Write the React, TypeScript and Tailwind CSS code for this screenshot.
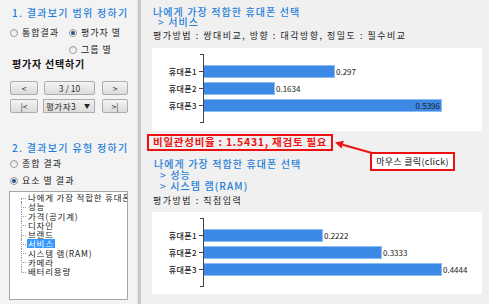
const font = "font-['Noto_Sans_CJK_KR','Noto_Sans',sans-serif]";

type Row = { label: string; value: number; text: string; inside?: boolean };

const serviceRows: Row[] = [
  { label: "휴대폰1", value: 0.297, text: "0.297" },
  { label: "휴대폰2", value: 0.1634, text: "0.1634" },
  { label: "휴대폰3", value: 0.5396, text: "0.5396", inside: true },
];

const ramRows: Row[] = [
  { label: "휴대폰1", value: 0.2222, text: "0.2222" },
  { label: "휴대폰2", value: 0.3333, text: "0.3333" },
  { label: "휴대폰3", value: 0.4444, text: "0.4444" },
];

const treeItems = [
  "나에게 가장 적합한 휴대폰 선택",
  "성능",
  "가격(공기계)",
  "디자인",
  "브랜드",
  "서비스",
  "시스템 램(RAM)",
  "카메라",
  "배터리용량",
];

function Radio({ label, checked }: { label: string; checked?: boolean }) {
  return (
    <div className="flex items-center gap-[4px] h-[12px]">
      <span className="w-[8px] h-[8px] rounded-full border border-[#9a9a9a] bg-gradient-to-b from-[#e6e6e6] to-[#fbfbfb] flex items-center justify-center">
        {checked && <span className="w-[4px] h-[4px] rounded-full bg-[#26518f]" />}
      </span>
      <span className="text-[9px] leading-[12px] text-[#222] tracking-[1px]">{label}</span>
    </div>
  );
}

function Btn({ w, children }: { w: string; children: React.ReactNode }) {
  return (
    <div
      className={`${w} h-[14px] rounded-[2px] border border-[#acacac] bg-gradient-to-b from-[#f4f4f4] to-[#dcdcdc] flex items-center justify-center text-[8.5px] leading-none text-[#333]`}
    >
      {children}
    </div>
  );
}

function BarChart({ rows, h }: { rows: Row[]; h: string }) {
  const max = Math.max(...rows.map((r) => r.value));
  return (
    <div className={`ml-[11px] w-[330px] ${h} bg-white relative pt-[17px]`}>
      <div className="absolute left-[48px] top-[6px] w-[4px] h-[69px] border-y border-r border-[#444]" />
      {rows.map((r) => (
        <div key={r.label} className="flex items-center h-[13px] mb-[4px]">
          <span className="w-[45px] text-right text-[8px] leading-none font-medium text-[#222] tracking-[0.4px]">
            {r.label}
          </span>
          <span className="ml-[2px] w-[4px] h-px bg-[#444]" />
          <div
            className="h-[13px] bg-[#3c89e6] border border-[#8dbdf3] flex items-center justify-end"
            style={{ width: Math.round((r.value / max) * 239) }}
          >
            {r.inside && <span className="text-[8px] leading-none text-[#222] pr-[1px]">{r.text}</span>}
          </div>
          {!r.inside && <span className="ml-[1px] text-[8px] leading-none text-[#222]">{r.text}</span>}
        </div>
      ))}
    </div>
  );
}

export default function App() {
  return (
    <div className={`w-[489px] h-[304px] flex overflow-hidden bg-[#f0f0f0] ${font}`}>
      {/* 왼쪽 설정 패널 */}
      <div className="w-[137px] shrink-0 bg-[#f3f3f3] pt-[7px] flex flex-col">
        <div className="ml-[12px] text-[10px] leading-[11px] font-medium text-[#1f7fd8] tracking-[1.3px] whitespace-nowrap">
          1. 결과보기 범위 정하기
        </div>
        <div className="ml-[10px] mt-[9px] flex">
          <div className="w-[59px]">
            <Radio label="통합결과" />
          </div>
          <Radio label="평가자 별" checked />
        </div>
        <div className="ml-[69px] mt-[5px]">
          <Radio label="그룹 별" />
        </div>
        <div className="ml-[12px] mt-[2px] text-[10px] leading-[11px] font-bold text-[#111] tracking-[0.8px]">
          평가자 선택하기
        </div>

        <div className="ml-[10px] mt-[12px] flex gap-[6px]">
          <Btn w="w-[28px]">&lt;</Btn>
          <Btn w="w-[51px]">3 / 10</Btn>
          <div className="ml-[1px]">
            <Btn w="w-[26px]">&gt;</Btn>
          </div>
        </div>
        <div className="ml-[10px] mt-[4px] flex gap-[5px]">
          <Btn w="w-[28px]">|&lt;</Btn>
          <div className="w-[52px] h-[14px] border border-[#acacac] bg-gradient-to-b from-[#f0f0f0] to-[#dddddd] flex items-center justify-between pl-[2px] pr-[4px] text-[8.5px] leading-none text-[#222]">
            <span className="tracking-[0.5px]">평가자3</span>
            <span className="text-[6px]">▼</span>
          </div>
          <div className="ml-[2px]">
            <Btn w="w-[26px]">&gt;|</Btn>
          </div>
        </div>

        <div className="ml-[12px] mt-[29px] text-[10px] leading-[11px] font-medium text-[#1f7fd8] tracking-[1.3px] whitespace-nowrap">
          2. 결과보기 유형 정하기
        </div>
        <div className="ml-[10px] mt-[5px]">
          <Radio label="종합 결과" />
        </div>
        <div className="ml-[10px] mt-[5px]">
          <Radio label="요소 별 결과" checked />
        </div>

        {/* 트리 */}
        <div className="ml-[9px] mt-[4px] w-[119px] h-[109px] bg-white border border-[#a5a5a5] overflow-hidden pt-[1px]">
          {treeItems.map((t, i) => (
            <div key={t} className="relative h-[9.25px] pl-[17px] flex items-center whitespace-nowrap">
              <span
                className={`absolute left-[11px] w-0 border-l border-dotted border-[#9a9a9a] ${
                  i === 0 ? "top-[4.5px] bottom-0" : i === treeItems.length - 1 ? "top-0 h-[4.5px]" : "top-0 bottom-0"
                }`}
              />
              <span className="absolute left-[11px] top-[4.5px] w-[5px] h-0 border-t border-dotted border-[#9a9a9a]" />
              <span
                className={`text-[8.5px] leading-[9px] px-[1px] tracking-[0.8px] ${
                  t === "서비스" ? "bg-[#3399ff] text-white" : "text-[#222]"
                }`}
              >
                {t}
              </span>
            </div>
          ))}
        </div>
      </div>

      {/* 구분선 */}
      <div className="w-[4px] shrink-0 bg-[#c8c8c8] border-l border-[#dedede]" />

      {/* 오른쪽 결과 패널 */}
      <div className="flex-1 relative pt-[7px] flex flex-col">
        <div className="ml-[12px] text-[10px] leading-[10px] font-medium text-[#1f7fd8] tracking-[1.1px]">
          나에게 가장 적합한 휴대폰 선택
        </div>
        <div className="ml-[17px] text-[10px] leading-[10px] font-medium text-[#1f7fd8] tracking-[1.1px]">&gt; 서비스</div>
        <div className="ml-[12px] mt-[4px] text-[9px] leading-[10px] text-[#222] tracking-[1.5px] whitespace-nowrap">
          평가방법 : 쌍대비교, 방향 : 대각방향, 정밀도 : 필수비교
        </div>
        <div className="mt-[7px]">
          <BarChart rows={serviceRows} h="h-[83px]" />
        </div>

        <div className="ml-[6px] mt-[3px] w-[186px] h-[17px] border-2 border-[#ee1111] flex items-center pl-[4px] text-[10.5px] leading-none font-bold text-[#ee1111] tracking-[0.75px] whitespace-nowrap">
          비일관성비율 : 1.5431, 재검토 필요
        </div>

        <div className="ml-[13px] mt-[7px] text-[10px] leading-[11px] font-medium text-[#1f7fd8] tracking-[1.1px]">
          나에게 가장 적합한 휴대폰 선택
        </div>
        <div className="ml-[19px] text-[10px] leading-[11px] font-medium text-[#1f7fd8] tracking-[1.1px]">&gt; 성능</div>
        <div className="ml-[19px] text-[10px] leading-[11px] font-medium text-[#1f7fd8] tracking-[1.1px]">
          &gt; 시스템 램(RAM)
        </div>
        <div className="ml-[12px] mt-[5px] text-[9px] leading-[10px] text-[#222] tracking-[1.5px]">평가방법 : 직접입력</div>
        <div className="mt-[6px]">
          <BarChart rows={ramRows} h="h-[82px]" />
        </div>

        {/* 말풍선 주석 */}
        <svg className="absolute left-[190px] top-[136px]" width="45" height="22" viewBox="0 0 45 22">
          <line x1="41" y1="17" x2="11.7" y2="8.7" stroke="#ee1111" strokeWidth="2" />
          <polygon points="4,6.5 12.8,4.8 10.6,12.5" fill="#ee1111" />
        </svg>
        <div className="absolute left-[229px] top-[152px] w-[85px] h-[19px] border-2 border-[#ee1111] bg-white flex items-center justify-center text-[9px] leading-none text-[#111] tracking-[0.3px]">
          마우스 클릭(click)
        </div>
      </div>
    </div>
  );
}
